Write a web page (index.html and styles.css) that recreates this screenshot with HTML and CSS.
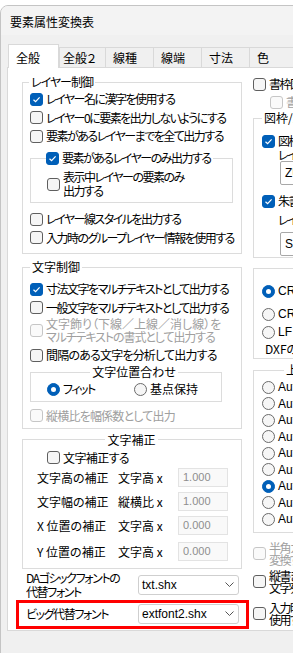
FILE: index.html
```html
<!DOCTYPE html>
<html lang="ja">
<head>
    <meta charset="UTF-8">
    <title>要素属性変換表</title>
    <link rel="stylesheet" href="styles.css">
</head>
<body>
<div class="window">
    <div class="titlebar">要素属性変換表</div>
    <div class="client">
        <div class="tabs">
            <div class="tab active">全般</div>
            <div class="tab tab-narrow">全般２</div>
            <div class="tab">線種</div>
            <div class="tab">線端</div>
            <div class="tab">寸法</div>
            <div class="tab">色</div>
            <div class="tab">出力</div>
        </div>

        <div class="panel">
            <!-- left column -->
            <div class="col-left">
                <fieldset class="group group-layer">
                    <legend>レイヤー制御</legend>
                    <div class="row"><span class="cb on"><svg width="9" height="9" viewBox="0 0 9 9"><path d="M1.5 4.7 L3.6 6.7 L7.6 2.4" fill="none" stroke="#fff" stroke-width="1.2"/></svg></span>レイヤー名に漢字を使用する</div>
                    <div class="row"><span class="cb"></span>レイヤー0に要素を出力しないようにする</div>
                    <div class="row"><span class="cb"></span>要素があるレイヤーまでを全て出力する</div>
                    <fieldset class="subgroup">
                        <legend class="legend-box"><span class="row legend-row"><span class="cb on"><svg width="9" height="9" viewBox="0 0 9 9"><path d="M1.5 4.7 L3.6 6.7 L7.6 2.4" fill="none" stroke="#fff" stroke-width="1.2"/></svg></span>要素があるレイヤーのみ出力する</span></legend>
                        <div class="row tall"><span class="cb"></span><span class="lines">表示中レイヤーの要素のみ<br>出力する</span></div>
                    </fieldset>
                    <div class="row after-sub"><span class="cb"></span>レイヤー線スタイルを出力する</div>
                    <div class="row"><span class="cb"></span>入力時のグループレイヤー情報を使用する</div>
                </fieldset>

                <fieldset class="group group-text">
                    <legend>文字制御</legend>
                    <div class="row"><span class="cb on"><svg width="9" height="9" viewBox="0 0 9 9"><path d="M1.5 4.7 L3.6 6.7 L7.6 2.4" fill="none" stroke="#fff" stroke-width="1.2"/></svg></span>寸法文字をマルチテキストとして出力する</div>
                    <div class="row"><span class="cb"></span>一般文字をマルチテキストとして出力する</div>
                    <div class="row tall disabled"><span class="cb"></span><span class="lines lines-13"><span class="line-wide">文字飾り（下線／上線／消し線）を</span><br><span class="line-mid">マルチテキストの書式として出力する</span></span></div>
                    <div class="row row-gap kanji"><span class="cb"></span>間隔のある文字を分析して出力する</div>
                    <fieldset class="subgroup subgroup-align">
                        <legend class="legend-center">文字位置合わせ</legend>
                        <div class="row">
                            <span class="radio-item"><span class="rb on"></span>フィット</span>
                            <span class="radio-item kanji"><span class="rb"></span>基点保持</span>
                        </div>
                    </fieldset>
                    <div class="row after-align disabled kanji"><span class="cb"></span>縦横比を幅係数として出力</div>
                </fieldset>

                <fieldset class="group group-corr">
                    <legend class="legend-center">文字補正</legend>
                    <div class="row indent"><span class="cb"></span>文字補正する</div>
                    <div class="corr-row first"><span class="corr-name">文字高の補正</span><span class="corr-base">文字高 x</span><span class="num">1.000</span></div>
                    <div class="corr-row"><span class="corr-name">文字幅の補正</span><span class="corr-base">縦横比 x</span><span class="num">1.000</span></div>
                    <div class="corr-row"><span class="corr-name">X 位置の補正</span><span class="corr-base">文字高 x</span><span class="num">0.000</span></div>
                    <div class="corr-row last"><span class="corr-name">Y 位置の補正</span><span class="corr-base">文字高 x</span><span class="num">0.000</span></div>
                </fieldset>

                <div class="font-row">
                    <span class="font-name lines">DAゴシックフォントの<br>代替フォント</span>
                    <span class="select">txt.shx<svg width="9" height="5" viewBox="0 0 9 5"><path d="M0.5 0.5 L4.5 4.5 L8.5 0.5" fill="none" stroke="#555" stroke-width="1"/></svg></span>
                </div>
                <div class="font-row highlight">
                    <span class="font-name">ビッグ代替フォント</span>
                    <span class="select">extfont2.shx<svg width="9" height="5" viewBox="0 0 9 5"><path d="M0.5 0.5 L4.5 4.5 L8.5 0.5" fill="none" stroke="#555" stroke-width="1"/></svg></span>
                </div>
            </div>

            <!-- right column -->
            <div class="col-right">
                <div class="row"><span class="cb"></span>書枠図形を出力する</div>
                <div class="row sub disabled"><span class="cb"></span>書枠レイヤーを使用する</div>
                <fieldset class="group group-frame">
                    <legend>図枠/朱書き</legend>
                    <div class="row"><span class="cb on"><svg width="9" height="9" viewBox="0 0 9 9"><path d="M1.5 4.7 L3.6 6.7 L7.6 2.4" fill="none" stroke="#fff" stroke-width="1.2"/></svg></span>図枠を出力する</div>
                    <div class="field-label">レイヤー名</div>
                    <div class="edit">ZUWAKU</div>
                    <div class="row frame-second"><span class="cb on"><svg width="9" height="9" viewBox="0 0 9 9"><path d="M1.5 4.7 L3.6 6.7 L7.6 2.4" fill="none" stroke="#fff" stroke-width="1.2"/></svg></span>朱書きを出力する</div>
                    <div class="field-label second">レイヤー名</div>
                    <div class="edit second">SYUGAKI</div>
                </fieldset>

                <fieldset class="group group-crlf">
                    <div class="row"><span class="rb on"></span>CR+LF</div>
                    <div class="row crlf-gap"><span class="rb"></span>CR</div>
                    <div class="row"><span class="rb"></span>LF</div>
                    <div class="note">DXFの改行コード</div>
                </fieldset>

                <fieldset class="group group-ver">
                    <legend>上位バージョン</legend>
                    <div class="row short"><span class="rb"></span>AutoCAD R12</div>
                    <div class="row short"><span class="rb"></span>AutoCAD R13</div>
                    <div class="row short"><span class="rb"></span>AutoCAD R14</div>
                    <div class="row short"><span class="rb"></span>AutoCAD 2000</div>
                    <div class="row short"><span class="rb"></span>AutoCAD 2004</div>
                    <div class="row short"><span class="rb"></span>AutoCAD 2007</div>
                    <div class="row short"><span class="rb on"></span>AutoCAD 2010</div>
                    <div class="row short"><span class="rb"></span>AutoCAD 2013</div>
                    <div class="row short"><span class="rb"></span>AutoCAD 2018</div>
                </fieldset>

                <div class="row tall small-lines disabled first-bottom"><span class="cb"></span><span class="lines">半角カナを全角に<br>変換する</span></div>
                <div class="row tall small-lines second-bottom"><span class="cb"></span><span class="lines">縦書き文字を<br>文字列で出力する</span></div>
                <div class="row tall small-lines third-bottom"><span class="cb"></span><span class="lines">入力時の情報を<br>使用する</span></div>
            </div>
        </div>
    </div>
</div>
</body>
</html>
```

FILE: styles.css
```css
body {
    margin: 0;
    padding-top: 5px;
    background-color: #ffffff;
    color: #000000;
    font-family: "Noto Sans CJK JP", sans-serif;
    font-size: 12px;
    font-feature-settings: "palt";
    overflow: hidden;
}

.window {
    width: 420px;
    height: 700px;
    border: 1px solid #c4c4c4;
    border-radius: 8px 0 0 0;
    background-color: #f0f0f0;
    overflow: hidden;
}

.titlebar {
    height: 29px;
    padding: 2px 0 0 9px;
    box-sizing: border-box;
    line-height: 28px;
    background-color: #f3f3f3;
}

.client {
    padding: 9px 0 0 6px;
}

/* tabs */
.tabs {
    position: relative;
    z-index: 1;
    display: flex;
    align-items: flex-end;
    height: 24px;
    margin-bottom: -1px;
    padding-left: 1px;
}

.tab {
    box-sizing: border-box;
    width: 49px;
    height: 20px;
    margin: 0 0 1px -1px;
    padding-left: 7px;
    border: 1px solid #d9d9d9;
    border-bottom: none;
    background-color: #f0f0f0;
    line-height: 19px;
}

.tab.active {
    width: 51px;
    height: 24px;
    margin: 0;
    padding-top: 3px;
    background-color: #ffffff;
}

.tab.tab-narrow {
    width: 47px;
    margin-left: 0;
    padding-left: 3px;
}

.panel {
    display: flex;
    gap: 11px;
    box-sizing: border-box;
    height: 564px;
    padding: 7px 0 0 14px;
    border: 1px solid #d9d9d9;
    background-color: #ffffff;
}

.col-left {
    flex: none;
    width: 220px;
}

.col-right {
    flex: none;
    width: 220px;
}

/* groups */
.group {
    margin: 0;
    padding: 0 8px 6px 7px;
    border: 1px solid #dcdcdc;
    min-width: 0;
}

.group legend {
    height: 14px;
    padding: 0 2px;
    line-height: 14px;
}

.group-layer legend {
    margin-left: -1px;
    letter-spacing: -1px;
}

.group-layer {
    padding-top: 1px;
}

.group-text {
    margin-top: 6px;
    padding-top: 6px;
    padding-bottom: 3px;
}

.group-corr {
    margin-top: 4px;
    padding-top: 2px;
    padding-bottom: 7px;
}

.subgroup {
    margin: 3.5px 0 0;
    padding: 3px 0 4px 16px;
    border: 1px solid #dcdcdc;
    min-width: 0;
}

.subgroup .legend-box {
    height: 18px;
    padding: 0 2px 0 0;
    line-height: 18px;
}

.legend-row {
    height: 18px;
}

.subgroup-align {
    margin: 1px 11px 0 0;
    padding: 1px 0 2px 16px;
}

.legend-center {
    margin: 0 auto;
}

.subgroup .legend-center {
    height: 14px;
    padding: 0 2px;
    line-height: 14px;
}

/* rows */
.row {
    display: flex;
    align-items: center;
    height: 18.5px;
    line-height: 14px;
    letter-spacing: -1.5px;
    white-space: nowrap;
}

.row.kanji {
    letter-spacing: -0.8px;
}

.row.tall {
    height: 28px;
}

.lines {
    line-height: 14px;
}

.lines-13 {
    line-height: 13px;
}

.line-wide {
    letter-spacing: 0;
}

.line-mid {
    letter-spacing: -1.1px;
}

.group-text .row.tall {
    height: 26px;
}

.row-gap {
    margin-top: 3px;
    height: 18px;
}

.after-sub {
    margin-top: 7px;
}

.after-align {
    margin-top: 5px;
    height: 18px;
}

.indent {
    padding-left: 17px;
    height: 18px;
    letter-spacing: -0.6px;
}

.disabled {
    color: #a0a0a0;
}

.cb {
    flex: none;
    display: flex;
    align-items: center;
    justify-content: center;
    box-sizing: border-box;
    width: 13px;
    height: 13px;
    margin-right: 3px;
    border: 1px solid #5f5f5f;
    border-radius: 3px;
    background-color: #f6f6f6;
}

.cb.on {
    border-color: #005fb8;
    background-color: #005fb8;
}

.disabled .cb {
    border-color: #c6c6c6;
    background-color: #fafafa;
}

.rb {
    flex: none;
    display: flex;
    align-items: center;
    justify-content: center;
    box-sizing: border-box;
    width: 13px;
    height: 13px;
    margin-right: 3px;
    border: 1px solid #6a6a6a;
    border-radius: 50%;
    background-color: #f6f6f6;
}

.rb.on {
    border-color: #005fb8;
    background-color: #005fb8;
}

.rb.on::after {
    content: "";
    width: 5px;
    height: 5px;
    border-radius: 50%;
    background-color: #ffffff;
}

.radio-item {
    display: flex;
    align-items: center;
    width: 89px;
}

.radio-item.kanji {
    letter-spacing: 0;
}

/* correction rows */
.corr-row {
    display: flex;
    align-items: center;
    height: 19px;
    margin-top: 5px;
    padding-left: 7px;
    white-space: nowrap;
}

.corr-row.first {
    margin-top: 1px;
}

.corr-row.last {
    margin-top: 7px;
}

.corr-name {
    width: 81px;
}

.corr-base {
    width: 60px;
}

.num {
    box-sizing: border-box;
    width: 50px;
    height: 19px;
    padding-left: 4px;
    border: 1px solid #e3e3e3;
    background-color: #f9f9f9;
    color: #8e8e8e;
    font-family: "Liberation Sans", sans-serif;
    font-size: 11px;
    line-height: 17px;
}

/* font rows */
.font-row {
    display: flex;
    align-items: center;
    height: 28px;
    margin-top: 2px;
    padding-left: 4px;
    white-space: nowrap;
}

.font-name {
    width: 112px;
    letter-spacing: -1.4px;
}

.font-row.highlight {
    height: auto;
    margin: 1px -7px 0 -6px;
    padding: 1px 7px 2px 7px;
    border: 3px solid #ff0000;
}

.select {
    display: flex;
    align-items: center;
    justify-content: space-between;
    box-sizing: border-box;
    width: 101px;
    height: 20px;
    padding: 0 4px 0 3px;
    border: 1px solid #cfcfcf;
    border-radius: 3px;
    background-color: #ffffff;
    font-family: "Liberation Sans", sans-serif;
    font-size: 12px;
}

/* right column */
.col-right > .row {
    height: 18px;
}

.col-right .row.sub {
    padding-left: 17px;
}

.group-frame {
    padding: 7px 0 1px 8px;
}

.group-frame .row {
    height: 18px;
}

.field-label {
    margin: -1px 0 0 16px;
    line-height: 12px;
    letter-spacing: -1.4px;
    white-space: nowrap;
}

.field-label.second {
    margin-top: 4px;
}

.edit {
    box-sizing: border-box;
    width: 150px;
    height: 24px;
    margin-left: 18px;
    padding-left: 4px;
    border: 1px solid #a8a8a8;
    border-radius: 2px;
    background-color: #ffffff;
    font-family: "Liberation Sans", sans-serif;
    line-height: 22px;
}

.edit.second {
    margin-top: 6px;
}

.frame-second {
    margin-top: 7px;
}

.group-crlf {
    margin-top: 10px;
    padding: 13px 0 2px 8px;
}

.group-crlf .row {
    height: 18px;
    font-family: "Liberation Sans", sans-serif;
    letter-spacing: 0;
}

.crlf-gap {
    margin-top: 5px;
}

.note {
    margin: 1px 0 0 3px;
    line-height: 14px;
    white-space: nowrap;
}

.group-ver {
    margin-top: 4px;
    padding: 2px 0 4px 8px;
}

.group-ver legend {
    margin-left: 22px;
}

.row.short {
    height: 16.5px;
    font-family: "Liberation Sans", sans-serif;
    letter-spacing: 0;
}

.small-lines .lines {
    line-height: 12px;
}

.col-right .row.tall {
    height: 24px;
}

.first-bottom {
    margin-top: 9px;
}

.second-bottom {
    margin-top: 4px;
}

.third-bottom {
    margin-top: 8px;
}
```
